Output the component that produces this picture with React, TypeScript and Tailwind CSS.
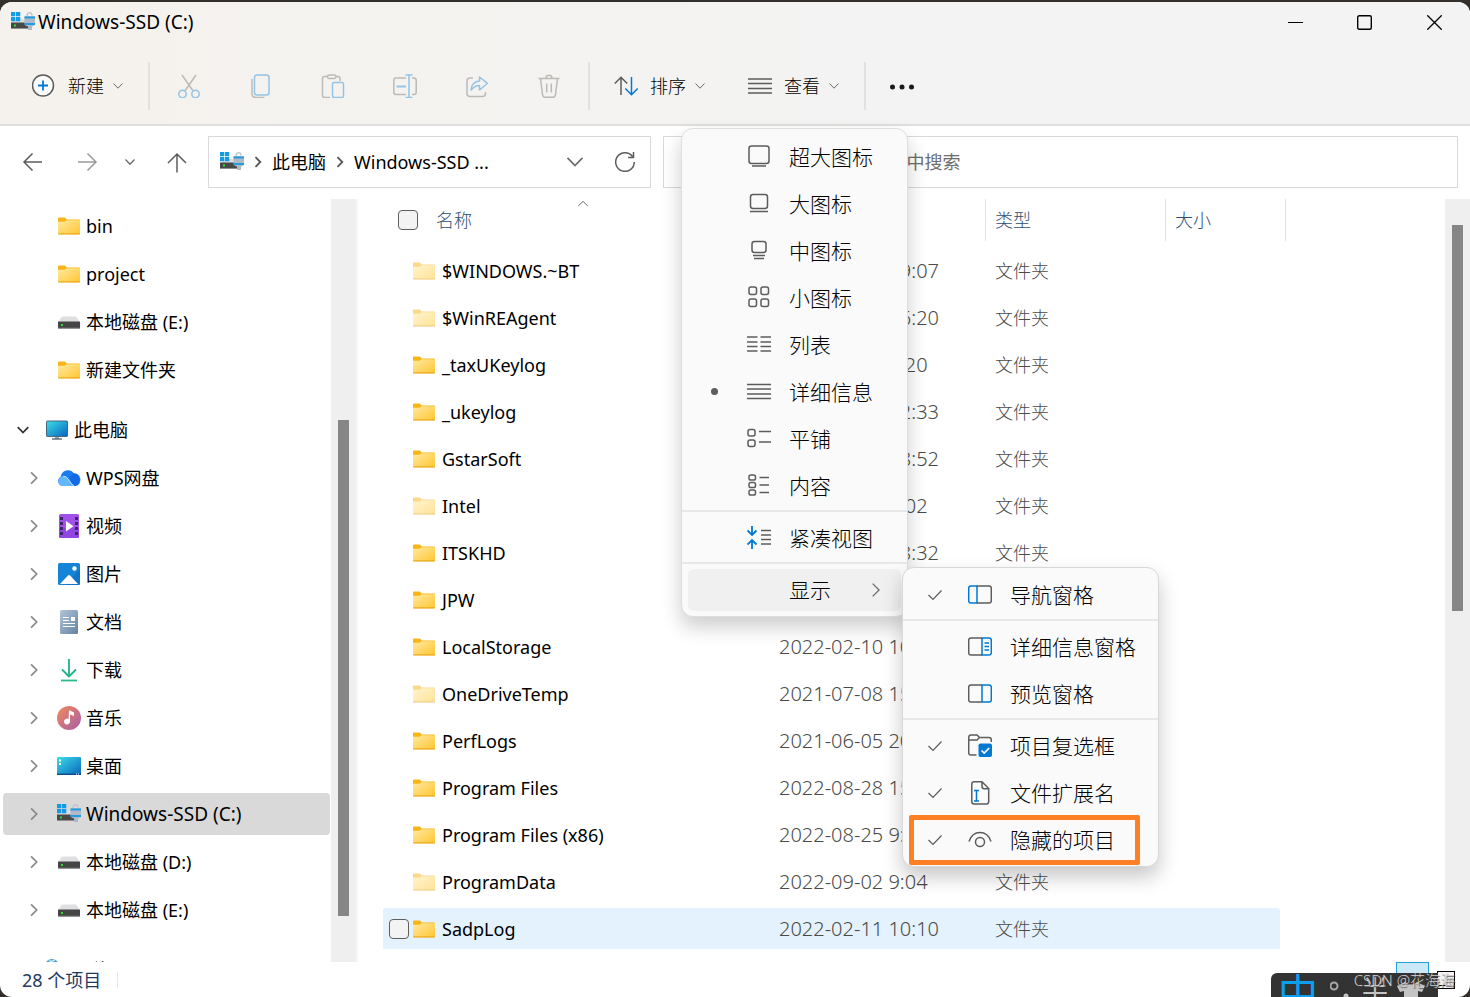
import type { ReactNode } from "react";
import clsx from "clsx";

const GRAY = "#5c5c5c";
const BLUE = "#0078d4";

const Chevron = ({ d, size = 12, color = "#6b6b6b", width = 1.3 }: { d: "down" | "right" | "up"; size?: number; color?: string; width?: number }) => {
    const paths = { down: "M1.5 3.5 6 8.2l4.5-4.7", right: "M3.5 1.2 8.3 6l-4.8 4.8", up: "M1.2 8 6 3.4 10.8 8" };
    return (
        <svg width={size} height={size} viewBox="0 0 12 12" fill="none" stroke={color} strokeWidth={width} className="shrink-0" aria-hidden="true">
            <path d={paths[d]} />
        </svg>
    );
};

const LineIcon = ({ children, size = 24, stroke = GRAY, width = 1.5 }: { children: ReactNode; size?: number; stroke?: string; width?: number }) => (
    <svg width={size} height={size} viewBox="0 0 24 24" fill="none" stroke={stroke} strokeWidth={width} className="shrink-0" aria-hidden="true">
        {children}
    </svg>
);

const FolderIcon = ({ faded }: { faded?: boolean }) => (
    <svg width="22" height="18" viewBox="0 0 22 18" className={clsx("shrink-0", faded && "opacity-50")} aria-hidden="true">
        <defs>
            <linearGradient id="folder" x1="0" y1="0" x2="1" y2="1">
                <stop offset="0" stopColor="#ffe9a3" />
                <stop offset="1" stopColor="#ffc62f" />
            </linearGradient>
        </defs>
        <path d="M0 1.5Q0 .5 1 .5h5.500q.6 0 1 .5l1.200 1.500H21q1 0 1 1V6H0Z" fill="#f8b517" />
        <path d="M0 4.800h6.500L8.600 3.200H22V16.500q0 1-1 1H1q-1 0-1-1Z" fill="url(#folder)" />
        <path d="M.2 16.900h21.600" stroke="#e9a21b" />
    </svg>
);

const DriveIcon = () => (
    <svg width="22" height="13" viewBox="0 0 22 13" className="shrink-0" aria-hidden="true">
        <path d="M4 .5h14l4 5.500H0Z" fill="#dfdfe1" />
        <rect y="5.500" width="22" height="7" rx=".5" fill="#454545" />
        <path d="M0 12.200h22" stroke="#8b8b8b" strokeWidth=".8" />
        <rect x="3" y="8" width="2" height="2" fill="#2bdc3b" />
    </svg>
);

const SystemDriveIcon = () => (
    <svg width="24" height="20" viewBox="0 0 24 20" className="shrink-0" aria-hidden="true">
        <path d="M0 11 5 7h10v4H0Z" fill="#dcdcde" />
        <path d="M0 0h4.300v4.200H0zM5 0h4.300v4.200H5zM0 5h4.300v4.200H0zM5 5h4.300v4.200H5z" fill="#149be6" />
        <rect y="10.500" width="20" height="6.500" fill="#484848" />
        <path d="M0 16.500h17" stroke="#909090" />
        <rect x="3" y="12.500" width="2" height="2" fill="#2bdc3b" />
        <path d="M16.300 6V2.500a2.400 2.400 0 0 1 4.600 0V3.500" fill="none" stroke="#bcc5ce" strokeWidth="1.500" />
        <path d="M13.500 5q0-1 1-1h8.500q1 0 1 1v6q0 3-3 3.500v3.500h-4v-3.500q-3.500-.5-3.500-3.500Z" fill="#aebac6" />
        <path d="M13.500 4.500H24v2H13.500zM13.500 11H24v2H13.500z" fill="#259be6" />
    </svg>
);

const MonitorIcon = () => (
    <svg width="22" height="20" viewBox="0 0 22 20" className="shrink-0" aria-hidden="true">
        <defs>
            <linearGradient id="screen" x1="0" y1="0" x2="1" y2="1">
                <stop offset="0" stopColor="#3adfe8" />
                <stop offset="1" stopColor="#0a64bd" />
            </linearGradient>
        </defs>
        <rect x=".5" y="1" width="21" height="15.500" rx=".7" fill="url(#screen)" stroke="#47697d" />
        <path d="M9 17h4v2H9z" fill="#9aa7b0" />
        <path d="M6 19h10" stroke="#45525b" strokeWidth="1.200" />
    </svg>
);

const CloudIcon = () => (
    <svg width="24" height="18" viewBox="0 0 24 18" className="shrink-0" aria-hidden="true">
        <path d="M5.500 17a5 5 0 0 1-1.800-9.300A7.500 7.500 0 0 1 17 4.200a6.600 6.600 0 0 1 1.500 12.800Z" fill="#1b7cf2" />
        <path d="M5 17A5 5 0 0 1 6 7.300q3.500-.5 5.500 3.200T17 17Z" fill="#63b7ff" />
        <path d="M6 7.300q3.500-.5 5.500 3.200T17 17" fill="none" stroke="#d9efff" strokeWidth=".8" />
        <path d="M12.500 9q2-5 6-4.500a6.400 6.400 0 0 1 0 12.500Q15 16 12.500 9Z" fill="#0d5fdc" opacity=".6" />
    </svg>
);

const VideoIcon = () => (
    <svg width="20" height="24" viewBox="0 0 20 24" className="shrink-0" aria-hidden="true">
        <rect width="20" height="24" rx="1.500" fill="#a052e8" />
        <path d="M0 14h20v8.500q0 1.500-1.500 1.500h-17Q0 24 0 22.500Z" fill="#8640e0" opacity=".6" />
        <path d="M1 3h3v3H1zm0 5h3v3H1zm0 5h3v3H1zm0 5h3v3H1zM16 3h3v3h-3zm0 5h3v3h-3zm0 5h3v3h-3zm0 5h3v3h-3z" fill="#42246d" />
        <path d="M7 7v10.500l7.500-5.200Z" fill="#fff" />
    </svg>
);

const PictureIcon = () => (
    <svg width="22" height="22" viewBox="0 0 22 22" className="shrink-0" aria-hidden="true">
        <rect width="22" height="22" rx="1.500" fill="#1584d6" />
        <path d="M22 6v14.500q0 1.500-1.500 1.500H8Z" fill="#0b67bd" opacity=".6" />
        <path d="m2 21 8-8.500q1-1 2 0l8 8.500Z" fill="#fff" />
        <circle cx="16.500" cy="5.500" r="2.200" fill="#fff" />
    </svg>
);

const DocumentIcon = () => (
    <svg width="18" height="24" viewBox="0 0 18 24" className="shrink-0" aria-hidden="true">
        <defs>
            <linearGradient id="doc" x1="0" y1="0" x2="1" y2="1">
                <stop offset="0" stopColor="#b4c6d8" />
                <stop offset="1" stopColor="#6482a2" />
            </linearGradient>
        </defs>
        <rect width="18" height="24" rx="1.500" fill="url(#doc)" />
        <path d="M3 7.500h6M3 10.500h6M3 13.500h12M3 16.500h12" stroke="#fff" strokeWidth="1.200" />
        <path d="M11 7h4v4h-4z" fill="#fff" />
    </svg>
);

const DownloadIcon = () => (
    <svg width="18" height="24" viewBox="0 0 18 24" fill="none" strokeWidth="1.800" className="shrink-0" aria-hidden="true">
        <path d="M9 1v17M2 11.500l7 7 7-7" stroke="#1cb489" />
        <path d="M1 22.500h16" stroke="#2cb98c" />
    </svg>
);

const MusicIcon = () => (
    <svg width="24" height="24" viewBox="0 0 24 24" className="shrink-0" aria-hidden="true">
        <defs>
            <linearGradient id="music" x1="0" y1="0" x2="1" y2="1">
                <stop offset="0" stopColor="#f08c57" />
                <stop offset="1" stopColor="#a95cab" />
            </linearGradient>
        </defs>
        <circle cx="12" cy="12" r="12" fill="url(#music)" />
        <path d="M12 4.500h1l4 2v3.500l-4-1.500v7a3 3 0 1 1-1.400-2.500Z" fill="#fff" />
    </svg>
);

const DesktopIcon = () => (
    <svg width="24" height="18" viewBox="0 0 24 18" className="shrink-0" aria-hidden="true">
        <rect width="24" height="18" rx="1" fill="url(#screen)" />
        <path d="M0 17.300h24" stroke="#0b4d8c" strokeWidth="1.400" />
        <path d="M2 2.500h2v2H2zM2 6h2v2H2z" fill="#fff" />
        <path d="M19 17h1m1 0h1" stroke="#fff" />
    </svg>
);

const GlobeIcon = () => (
    <svg width="22" height="22" viewBox="0 0 22 22" className="shrink-0" aria-hidden="true">
        <circle cx="6" cy="7" r="7" fill="#4a9cc9" />
        <path d="M3 1.500q3 2 6-1" stroke="#cfe9f5" strokeWidth="1.500" fill="none" />
        <rect x="8" y="9" width="14" height="10" fill="#2a84c6" />
    </svg>
);

type TreeItem = { name: string; icon: ReactNode; expandable?: boolean; selected?: boolean };

const quickItems: TreeItem[] = [
    { name: "bin", icon: <FolderIcon /> },
    { name: "project", icon: <FolderIcon /> },
    { name: "本地磁盘 (E:)", icon: <DriveIcon /> },
    { name: "新建文件夹", icon: <FolderIcon /> },
];

const computerItems: TreeItem[] = [
    { name: "WPS网盘", icon: <CloudIcon />, expandable: true },
    { name: "视频", icon: <VideoIcon />, expandable: true },
    { name: "图片", icon: <PictureIcon />, expandable: true },
    { name: "文档", icon: <DocumentIcon />, expandable: true },
    { name: "下载", icon: <DownloadIcon />, expandable: true },
    { name: "音乐", icon: <MusicIcon />, expandable: true },
    { name: "桌面", icon: <DesktopIcon />, expandable: true },
    { name: "Windows-SSD (C:)", icon: <SystemDriveIcon />, expandable: true, selected: true },
    { name: "本地磁盘 (D:)", icon: <DriveIcon />, expandable: true },
    { name: "本地磁盘 (E:)", icon: <DriveIcon />, expandable: true },
];

const files = [
    { name: "$WINDOWS.~BT", date: "2022-09-01 19:07", hidden: true },
    { name: "$WinREAgent", date: "2022-08-10 16:20", hidden: true },
    { name: "_taxUKeylog", date: "2022-03-15 9:20" },
    { name: "_ukeylog", date: "2022-03-14 12:33" },
    { name: "GstarSoft", date: "2022-02-10 18:52" },
    { name: "Intel", date: "2022-02-10 9:02", hidden: true },
    { name: "ITSKHD", date: "2022-04-12 18:32" },
    { name: "JPW", date: "2022-02-12 10:21" },
    { name: "LocalStorage", date: "2022-02-10 10:15" },
    { name: "OneDriveTemp", date: "2021-07-08 15:30", hidden: true },
    { name: "PerfLogs", date: "2021-06-05 20:10" },
    { name: "Program Files", date: "2022-08-28 15:12" },
    { name: "Program Files (x86)", date: "2022-08-25 9:14" },
    { name: "ProgramData", date: "2022-09-02 9:04", hidden: true },
    { name: "SadpLog", date: "2022-02-11 10:10", active: true },
];

const TreeRow = ({ item }: { item: TreeItem }) => (
    <li className="flex h-12 items-center pr-px pl-[3px]">
        <a href="#" className={clsx("flex h-[42px] w-full items-center rounded-sm pl-6", item.selected && "bg-[#d9d9d9]")}>
            <span className="w-[30px]">{item.expandable && <Chevron d="right" size={14} color="#8a8a8a" width={1.5} />}</span>
            <span className="flex w-6 justify-center">{item.icon}</span>
            <span className={clsx("ml-[5px]", item.selected && "text-[19px]")}>{item.name}</span>
        </a>
    </li>
);

const Separator = () => <span className="h-12 w-[2px] shrink-0 bg-[#e2e1df]" />;

const toolIcons = [
    {
        label: "剪切",
        icon: <>
            <path d="M5 1 15.800 16.500M19 1 8.200 16.500" stroke="#bcbab7" />
            <circle cx="5.500" cy="20" r="3.700" stroke="#94c3e6" /><circle cx="18.500" cy="20" r="3.700" stroke="#94c3e6" />
        </>,
    },
    {
        label: "复制",
        icon: <>
            <path d="M3 5v14.500q0 4 4 4h8.500" stroke="#bcbab7" />
            <rect x="5.500" y="1" width="14.500" height="20" rx="2.500" stroke="#94c3e6" />
        </>,
    },
    {
        label: "粘贴",
        icon: <>
            <path d="M6 2.500H3.500q-2 0-2 2v17q0 2 2 2H9M15 2.500h2q2 0 2 2V7" stroke="#bcbab7" />
            <rect x="6.500" y="1" width="8.500" height="3.500" rx="1.700" stroke="#bcbab7" />
            <rect x="11.500" y="8.500" width="11" height="15" rx="1.500" stroke="#94c3e6" />
        </>,
    },
    {
        label: "重命名",
        icon: <>
            <path d="M13 4H3Q.8 4 .8 6v12q0 2.500 2.200 2.500h10M19 4h2q2.200 0 2.200 2.500V18q0 2.500-2.200 2.500h-2" stroke="#bcbab7" />
            <path d="M3.500 12.500H13" stroke="#94c3e6" strokeWidth="2" /><path d="M16 1v22.500M12.500 1h7M12.500 23.500h7" stroke="#94c3e6" />
        </>,
    },
    {
        label: "共享",
        icon: <>
            <path d="M8 4H5Q2 4 2 7v12.500q0 3 3 3h12.500q3 0 3-3V18" stroke="#bcbab7" />
            <path d="M14.500 3v4Q7 7.500 6 16q4-4.500 8.500-4.500v4.500l8-6.700Z" stroke="#94c3e6" strokeLinejoin="round" />
        </>,
    },
    {
        label: "删除",
        icon: <path d="M1.500 4.500h21M3.500 4.500l2 16q.3 2.700 2.500 2.700h8q2.200 0 2.500-2.700l2-16M9 4q0-2.800 3-2.800T15 4M9.700 9.500v9M14.300 9.500v9" stroke="#bcbab7" />,
    },
];

const Toolbar = () => {
    const label = "ml-3 font-light";
    return (
        <nav aria-label="工具栏" className="flex h-[82px] items-center pt-1.5 pl-8">
            <button type="button" className="flex h-12 items-center">
                <LineIcon>
                    <circle cx="11" cy="11.500" r="10.500" fill="#fafafa" />
                    <path d="M11 6.500v10M6 11.500h10" stroke={BLUE} strokeWidth="1.800" />
                </LineIcon>
                <span className={label}>新建</span>
                <span className="ml-2"><Chevron d="down" width={1} /></span>
            </button>
            <span className="w-6" />
            <Separator />
            <div className="flex px-[3px]">
                {toolIcons.map((tool) => (
                    <button key={tool.label} type="button" disabled aria-label={tool.label} className="flex h-12 w-[72px] items-center justify-center">
                        <LineIcon>{tool.icon}</LineIcon>
                    </button>
                ))}
            </div>
            <Separator />
            <div className="flex gap-[42px] px-6">
                <button type="button" className="flex h-12 items-center">
                    <LineIcon>
                        <path d="M7 21V3.500M.8 9.500 7 3.300l6.200 6.200" />
                        <path d="M17.500 3v17.500M11.300 14.500l6.200 6.200 6.200-6.200" stroke={BLUE} />
                    </LineIcon>
                    <span className={label}>排序</span>
                    <span className="ml-2"><Chevron d="down" width={1} /></span>
                </button>
                <button type="button" aria-expanded="true" className="flex h-12 items-center">
                    <LineIcon>
                        <path d="M0 5h24M0 9.500h24M0 14.500h24M0 19h24" />
                    </LineIcon>
                    <span className={label}>查看</span>
                    <span className="ml-2"><Chevron d="down" width={1} /></span>
                </button>
            </div>
            <Separator />
            <button type="button" aria-label="更多" className="flex h-12 items-center px-6">
                <svg width="24" height="24" viewBox="0 0 24 24" fill="#1a1a1a" aria-hidden="true">
                    <circle cx="2.500" cy="13" r="2.500" /><circle cx="12" cy="13" r="2.500" /><circle cx="21.500" cy="13" r="2.500" />
                </svg>
            </button>
        </nav>
    );
};

const AddressRow = () => (
    <div className="flex h-[73px] items-center pr-3 pb-[2px] pl-1.5">
        <button type="button" aria-label="后退" className="flex w-[54px] justify-center">
            <LineIcon><path d="M21 12H3.500M11.500 3.500 3 12l8.500 8.500" /></LineIcon>
        </button>
        <button type="button" aria-label="前进" className="flex w-[54px] justify-center">
            <LineIcon stroke="#9a9a9a"><path d="M3 12h17.500M12.500 3.500 21 12l-8.500 8.500" /></LineIcon>
        </button>
        <button type="button" aria-label="最近浏览的位置" className="flex w-8 justify-center">
            <Chevron d="down" />
        </button>
        <button type="button" aria-label="向上" className="flex w-[62px] justify-center">
            <LineIcon><path d="M12 22.500V4M3 13l9-9 9 9" /></LineIcon>
        </button>
        <div className="flex h-[52px] w-[443px] items-center border border-[#d9d9d9] pl-[11px]">
            <SystemDriveIcon />
            <span className="flex w-7 justify-center"><Chevron d="right" color="#555" width={1.8} /></span>
            <a href="#">此电脑</a>
            <span className="flex w-7 justify-center"><Chevron d="right" color="#555" width={1.8} /></span>
            <a href="#">Windows-SSD ...</a>
            <button type="button" aria-label="历史记录" className="mr-7 ml-auto"><Chevron d="down" size={20} width={1} /></button>
            <button type="button" aria-label="刷新" className="mr-[13px]">
                <LineIcon><path d="M19.500 6.500A9.300 9.300 0 1 0 21.300 12M20.500 2v5.500H15" /></LineIcon>
            </button>
        </div>
        <input
            type="search"
            aria-label="搜索"
            placeholder="在 Windows-SSD (C:) 中搜索"
            className="ml-3 h-[52px] min-w-0 flex-1 border border-[#d9d9d9] pl-[68px] outline-none placeholder:text-[#6d6d6d]"
        />
    </div>
);

const Sidebar = () => (
    <aside className="flex w-[356px] shrink-0">
        <nav aria-label="导航窗格" className="min-w-0 flex-1 overflow-hidden pt-[3px]">
            <ul>{quickItems.map((item) => <TreeRow key={item.name} item={item} />)}</ul>
            <a href="#" className="mt-3 flex h-12 items-center pl-4">
                <Chevron d="down" size={14} color="#333" width={1.5} />
                <span className="ml-4"><MonitorIcon /></span>
                <span className="ml-1.5">此电脑</span>
            </a>
            <ul>{computerItems.map((item) => <TreeRow key={item.name} item={item} />)}</ul>
            <a href="#" className="mt-3 flex h-12 items-center pl-[30px]">
                <span className="ml-4"><GlobeIcon /></span>
                <span className="ml-1.5">网络</span>
            </a>
        </nav>
        <div className="w-[25px] bg-[#efefef] pt-[221px] pl-[7px]">
            <div className="h-[496px] w-[11px] bg-[#868686]" />
        </div>
    </aside>
);

const checkbox = "size-5 shrink-0 appearance-none rounded border border-[#5f5f5f] bg-[#f3f3f3]";

const FileTable = () => (
    <div className="min-w-0 flex-1 overflow-hidden border-l-2 border-[#f7f7f7] pl-[25px]">
        <table className="table-fixed border-separate border-spacing-0 text-left">
            <colgroup>
                <col className="w-[387px]" />
                <col className="w-[215px]" />
                <col className="w-[180px]" />
                <col className="w-[115px]" />
                <col className="w-[6px]" />
            </colgroup>
            <thead className="text-[#2f4d75]">
                <tr className="h-[49px] align-top">
                    <th className="relative p-0 font-light">
                        <div className="flex h-[42px] items-center pl-[15px]">
                            <input type="checkbox" aria-label="全选" className={checkbox} />
                            <span className="ml-[18px]">名称</span>
                        </div>
                        <span className="absolute -top-px left-[194px]"><Chevron d="up" width={1} /></span>
                    </th>
                    <th className="p-0 font-light"><div className="flex h-[42px] items-center pl-[9px]">修改日期</div></th>
                    <th className="p-0 font-light"><div className="flex h-[42px] items-center border-l border-[#e2e2e2] pl-[9px]">类型</div></th>
                    <th className="p-0 font-light"><div className="flex h-[42px] items-center border-l border-[#e2e2e2] pl-[9px]">大小</div></th>
                    <th className="p-0"><div className="h-[42px] border-r border-[#e2e2e2]" /></th>
                </tr>
            </thead>
            <tbody>
                {files.map((file) => {
                    const cell = clsx("border-t-2 border-b-4 border-transparent bg-clip-padding p-0", file.active && "bg-[#e4f2fd]");
                    return (
                        <tr key={file.name} className="h-[47px]">
                            <td className={clsx(cell, "rounded-l")}>
                                <div className="flex items-center pl-1.5">
                                    <span className="flex w-6">
                                        {file.active && <input type="checkbox" aria-label={file.name} className={checkbox} />}
                                    </span>
                                    <FolderIcon faded={file.hidden} />
                                    <span className="ml-[7px]">{file.name}</span>
                                </div>
                            </td>
                            <td className={clsx(cell, "pl-[9px] text-xl leading-6 font-light text-[#4a4a4a]")}>{file.date}</td>
                            <td className={clsx(cell, "pl-[10px] font-light text-[#4a4a4a]")}>文件夹</td>
                            <td className={clsx(cell, "rounded-r")} />
                            <td />
                        </tr>
                    );
                })}
            </tbody>
        </table>
    </div>
);

const MenuItem = ({ label, icon, mark, active }: { label: string; icon?: ReactNode; mark?: "dot" | "check"; active?: boolean }) => (
    <li className="flex h-[47px] items-center px-1.5">
        <button type="button" className={clsx("flex h-[42px] w-full items-center rounded-md", active && "bg-[#f0f0f0]")}>
            <span className="flex w-[52px] justify-center">
                {mark === "dot" && <span className="size-[7px] rounded-full bg-[#5c5c5c]" />}
                {mark === "check" && (
                    <svg width="14" height="12" viewBox="0 0 14 12" fill="none" stroke={GRAY} strokeWidth="1.200" aria-hidden="true">
                        <path d="M.5 6 5 10.500 13.500 1.500" />
                    </svg>
                )}
            </span>
            <span className="flex w-[38px] justify-center">{icon && <LineIcon>{icon}</LineIcon>}</span>
            <span className="ml-[11px] whitespace-nowrap">{label}</span>
            {active && <span className="mr-[17px] ml-auto"><Chevron d="right" size={16} width={1} /></span>}
        </button>
    </li>
);

const MenuDivider = () => <li role="separator" className="mt-px mb-[2px] h-[2px] bg-[#e8e8e8]" />;

const ViewMenu = () => (
    <ul className="absolute top-[128px] left-[681px] w-[227px] rounded-xl border border-[#dedede] bg-[#fafafa] pt-1 pb-[3px] text-[21px] font-light text-black shadow-[0_10px_20px_rgba(0,0,0,0.2)]">
        <MenuItem label="超大图标" icon={<><rect x="2" y="1" width="20" height="17.500" rx="2.500" /><path d="M5 21h14" /></>} />
        <MenuItem label="大图标" icon={<><rect x="3.500" y="2.500" width="17" height="14" rx="2.500" /><path d="M3 19.500h18" /></>} />
        <MenuItem label="中图标" icon={<><rect x="5" y="2.500" width="14" height="11" rx="2.500" /><path d="M6 16.500h12M7 19.500h10" /></>} />
        <MenuItem
            label="小图标"
            icon={<><rect x="2" y="1" width="7.500" height="7.500" rx="2" /><rect x="14" y="1" width="7.500" height="7.500" rx="2" /><rect x="2" y="13" width="7.500" height="7.500" rx="2" /><rect x="14" y="13" width="7.500" height="7.500" rx="2" /></>}
        />
        <MenuItem label="列表" icon={<path d="M0 4h10.500M13.500 4H24M0 9h10.500M13.500 9H24M0 13.500h10.500M13.500 13.500H24M0 18h10.500M13.500 18H24" />} />
        <MenuItem label="详细信息" mark="dot" icon={<path d="M0 4.500h24M0 9h24M0 14h24M0 18.500h24" />} />
        <MenuItem label="平铺" icon={<><rect x="1" y="2.500" width="7" height="6.500" rx="2" /><rect x="1" y="13" width="7" height="6.500" rx="2" /><path d="M12 4.500h12M12 15h12" /></>} />
        <MenuItem
            label="内容"
            icon={<><rect x="2" y="1" width="6.500" height="5" rx="1.800" /><rect x="2" y="8.500" width="6.500" height="5" rx="1.800" /><rect x="2" y="16" width="6.500" height="5" rx="1.800" /><path d="M12.500 3.500H22M12.500 11H22M12.500 18.500H22" /></>}
        />
        <MenuDivider />
        <MenuItem
            label="紧凑视图"
            icon={<><path d="M14 4.500h10M14 9h10M14 13.500h10M14 18h10" /><path d="M5 0v8.500M.5 4.500 5 9l4.500-4.500M5 23v-8.500M.5 18.500 5 14 9.500 18.500" stroke={BLUE} strokeWidth="1.800" /></>}
        />
        <MenuDivider />
        <MenuItem label="显示" active />
    </ul>
);

const ShowMenu = () => (
    <ul className="absolute top-[567px] left-[902px] w-[257px] rounded-xl border border-[#d8d8d8] bg-[#fafafa] py-[3px] text-[21px] font-light text-black shadow-[0_10px_20px_rgba(0,0,0,0.22)]">
        <MenuItem label="导航窗格" mark="check" icon={<><path d="M9 3h12q2.300 0 2.300 2.300v12.400q0 2.300-2.300 2.300H9" /><path d="M9 3H3Q.7 3 .7 5.300v12.400q0 2.300 2.300 2.300h6Z" stroke={BLUE} /></>} />
        <MenuDivider />
        <MenuItem
            label="详细信息窗格"
            icon={<><path d="M14 3H3Q.7 3 .7 5.300v12.400q0 2.300 2.300 2.300h11" /><path d="M14 3h7q2.300 0 2.300 2.300v12.400q0 2.300-2.300 2.300h-7ZM16.500 8h4.500M16.500 11.500h4.500M16.500 15h4.500" stroke={BLUE} /></>}
        />
        <MenuItem label="预览窗格" icon={<><path d="M14 3H3Q.7 3 .7 5.300v12.400q0 2.300 2.300 2.300h11" /><path d="M14 3h7q2.300 0 2.300 2.300v12.400q0 2.300-2.300 2.300h-7Z" stroke={BLUE} /></>} />
        <MenuDivider />
        <MenuItem
            label="项目复选框"
            mark="check"
            icon={<>
                <path d="M8.500 21H3Q.7 21 .7 18.700V3.500Q.7 1 3 1h6l2.500 2.500H21q2.300 0 2.300 2.300V8M.7 6H9l2.500-2.500" />
                <rect x="10.500" y="9.500" width="13.500" height="13.500" rx="2" fill={BLUE} stroke="none" />
                <path d="m13.500 16.500 2.700 2.500 5-5" stroke="#fff" strokeWidth="1.700" />
            </>}
        />
        <MenuItem
            label="文件扩展名"
            mark="check"
            icon={<>
                <path d="M14 .8H6Q3.800.8 3.800 3v17.500q0 2.500 2.200 2.500h12.500q2.200 0 2.200-2.500V7.500L14 .8V5.500q0 2.200 2.200 2.200h4.500" />
                <path d="M8.500 9.500v10.500M6 9.500h5M6 20h5" stroke={BLUE} />
            </>}
        />
        <li className="relative">
            <ul><MenuItem label="隐藏的项目" mark="check" icon={<><path d="M1 13.500Q4 4.500 12 4.500t11 9" /><circle cx="12" cy="14" r="4.500" /></>} /></ul>
            <span className="pointer-events-none absolute -top-px left-1.5 h-[50px] w-[231px] rounded-xs border-[5px] border-[#ff8024]" />
        </li>
    </ul>
);

const ImeBar = () => (
    <div className="absolute right-8 bottom-0 flex h-6 w-[167px] items-start gap-3 overflow-hidden rounded-tl-md bg-[#333] pl-[7px] text-[#c4c4c4]">
        <span className="text-[40px] leading-10 text-[#0a9ff0]">中</span>
        <svg width="20" height="24" viewBox="0 0 20 24" className="shrink-0" aria-hidden="true">
            <circle cx="4" cy="13" r="3.500" fill="none" stroke="#a8a8a8" strokeWidth="2" />
            <circle cx="16" cy="23" r="2.500" fill="#c4c4c4" />
        </svg>
        <span className="text-[26px] leading-8">半</span>
        <svg width="30" height="24" viewBox="0 0 30 24" className="-ml-1 shrink-0" aria-hidden="true">
            <path d="M9 9q6 5 12 0l8 4-3 6-4-1v6H8v-6l-4 1-3-6Z" fill="#c4c4c4" />
        </svg>
    </div>
);

export default function App() {
    return (
        <div className="relative h-screen overflow-hidden bg-[#332f2d] pt-[2px] text-[18px] leading-6 text-black" style={{ fontFamily: '"Noto Sans", "Noto Sans CJK SC", sans-serif' }}>
            <div className="flex h-full flex-col overflow-hidden rounded-xl bg-white">
                <header className="border-b-2 border-[#dfdfde] bg-linear-to-r from-[#f5f2ed] to-[#f3f3f3] to-60%">
                    <div className="flex h-10 items-center pl-[11px]">
                        <SystemDriveIcon />
                        <h1 className="ml-[3px] text-[19px]">Windows-SSD (C:)</h1>
                        <div className="ml-auto flex">
                            <button type="button" aria-label="最小化" className="flex h-10 w-[69px] items-center justify-center">
                                <svg width="15" height="15" stroke="#000" aria-hidden="true"><path d="M0 7.500h15" /></svg>
                            </button>
                            <button type="button" aria-label="最大化" className="flex h-10 w-[69px] items-center justify-center">
                                <svg width="15" height="15" fill="none" stroke="#000" strokeWidth="1.400" aria-hidden="true"><rect x=".7" y=".7" width="13.600" height="13.600" rx="1.500" /></svg>
                            </button>
                            <button type="button" aria-label="关闭" className="flex h-10 w-[71px] items-center justify-center">
                                <svg width="15" height="15" stroke="#000" strokeWidth="1.300" aria-hidden="true"><path d="m.3.300 14.400 14.400M14.700.300.300 14.700" /></svg>
                            </button>
                        </div>
                    </div>
                    <Toolbar />
                </header>
                <AddressRow />
                <main className="flex min-h-0 flex-1">
                    <Sidebar />
                    <FileTable />
                    <div className="w-[25px] shrink-0 bg-[#efefef] pt-[26px] pl-[7px]">
                        <div className="h-[386px] w-[11px] bg-[#868686]" />
                    </div>
                </main>
                <footer className="flex h-[35px] shrink-0 items-center pl-[22px] text-[#1f3a5f]">
                    <span>28 个项目</span>
                    <span className="ml-4 h-4 w-px bg-[#e8e8e8]" />
                    <div className="mr-[15px] ml-auto flex h-full items-center gap-2">
                        <button type="button" aria-label="详细信息" className="h-full w-[33px] border border-[#26a0da] bg-[#cbe8f6]" />
                        <button type="button" aria-label="大图标" className="flex h-[18px] w-[18px] items-end border border-black bg-[#f6f6f6] pb-[2px]">
                            <span className="h-px w-full bg-black" />
                        </button>
                    </div>
                </footer>
            </div>
            <ViewMenu />
            <ShowMenu />
            <ImeBar />
            <p className="absolute right-[15px] bottom-[7px] text-[15px] leading-5 font-light text-[#d0d0d0] [text-shadow:1px_1px_1px_#444]">CSDN @花海海</p>
        </div>
    );
}
